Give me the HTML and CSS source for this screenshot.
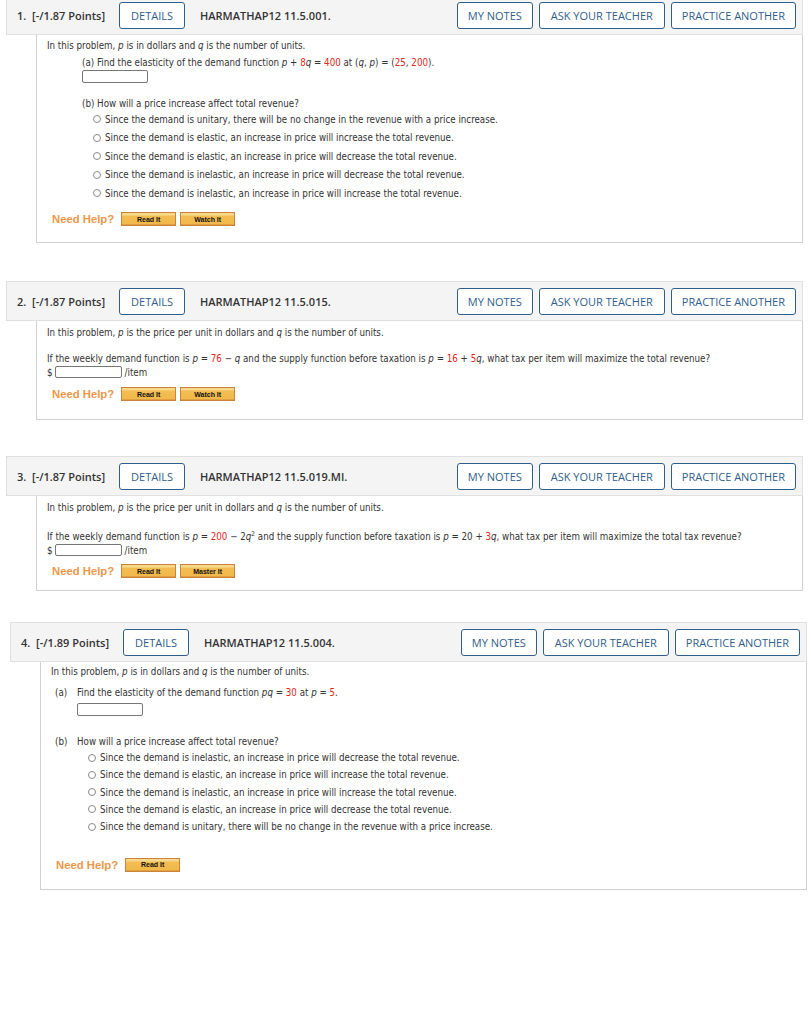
FILE: index.html
```html
<!DOCTYPE html>
<html>
<head>
<meta charset="utf-8">
<link rel="stylesheet" href="styles.css">
</head>
<body>
<div class="q q1">
  <div class="qhead">
    <span class="qnum">1.&nbsp; [-/1.87 Points]</span>
    <span class="btn details">DETAILS</span>
    <span class="code">HARMATHAP12 11.5.001.</span>
    <span class="spacer"></span>
    <span class="btn">MY NOTES</span>
    <span class="btn ask">ASK YOUR TEACHER</span>
    <span class="btn">PRACTICE ANOTHER</span>
  </div>
  <div class="qbody">
    <div class="line l-first">In this problem, <i>p</i> is in dollars and <i>q</i> is the number of units.</div>
    <div class="line a1">(a) Find the elasticity of the demand function <i>p</i> + <span class="r">8</span><i>q</i> = <span class="r">400</span> at (<i>q</i>, <i>p</i>) = (<span class="r">25</span>, <span class="r">200</span>).</div>
    <div class="ans a1in"><span class="inp w66"></span></div>
    <div class="line b1">(b) How will a price increase affect total revenue?</div>
    <div class="opts o1">
      <div class="opt"><span class="radio"></span>Since the demand is unitary, there will be no change in the revenue with a price increase.</div>
      <div class="opt"><span class="radio"></span>Since the demand is elastic, an increase in price will increase the total revenue.</div>
      <div class="opt"><span class="radio"></span>Since the demand is elastic, an increase in price will decrease the total revenue.</div>
      <div class="opt"><span class="radio"></span>Since the demand is inelastic, an increase in price will decrease the total revenue.</div>
      <div class="opt"><span class="radio"></span>Since the demand is inelastic, an increase in price will increase the total revenue.</div>
    </div>
    <div class="help h1"><span class="need">Need Help?</span><span class="hbtn">Read It</span><span class="hbtn">Watch It</span></div>
  </div>
</div>

<div class="q q2">
  <div class="qhead">
    <span class="qnum">2.&nbsp; [-/1.87 Points]</span>
    <span class="btn details">DETAILS</span>
    <span class="code">HARMATHAP12 11.5.015.</span>
    <span class="spacer"></span>
    <span class="btn">MY NOTES</span>
    <span class="btn ask">ASK YOUR TEACHER</span>
    <span class="btn">PRACTICE ANOTHER</span>
  </div>
  <div class="qbody">
    <div class="line l-first">In this problem, <i>p</i> is the price per unit in dollars and <i>q</i> is the number of units.</div>
    <div class="line if2">If the weekly demand function is <i>p</i> = <span class="r">76</span> − <i>q</i> and the supply function before taxation is <i>p</i> = <span class="r">16</span> + <span class="r">5</span><i>q</i>, what tax per item will maximize the total revenue?</div>
    <div class="dollar"><span>$</span><span class="inp w67"></span><span>/item</span></div>
    <div class="help h2"><span class="need">Need Help?</span><span class="hbtn">Read It</span><span class="hbtn">Watch It</span></div>
  </div>
</div>

<div class="q q3">
  <div class="qhead">
    <span class="qnum">3.&nbsp; [-/1.87 Points]</span>
    <span class="btn details">DETAILS</span>
    <span class="code">HARMATHAP12 11.5.019.MI.</span>
    <span class="spacer"></span>
    <span class="btn">MY NOTES</span>
    <span class="btn ask">ASK YOUR TEACHER</span>
    <span class="btn">PRACTICE ANOTHER</span>
  </div>
  <div class="qbody">
    <div class="line l-first">In this problem, <i>p</i> is the price per unit in dollars and <i>q</i> is the number of units.</div>
    <div class="line if3">If the weekly demand function is <i>p</i> = <span class="r">200</span> − 2<i>q</i><sup>2</sup> and the supply function before taxation is <i>p</i> = 20 + <span class="r">3</span><i>q</i>, what tax per item will maximize the total tax revenue?</div>
    <div class="dollar"><span>$</span><span class="inp w67"></span><span>/item</span></div>
    <div class="help h3"><span class="need">Need Help?</span><span class="hbtn">Read It</span><span class="hbtn">Master It</span></div>
  </div>
</div>

<div class="q q4">
  <div class="qhead">
    <span class="qnum">4.&nbsp; [-/1.89 Points]</span>
    <span class="btn details">DETAILS</span>
    <span class="code">HARMATHAP12 11.5.004.</span>
    <span class="spacer"></span>
    <span class="btn">MY NOTES</span>
    <span class="btn ask">ASK YOUR TEACHER</span>
    <span class="btn">PRACTICE ANOTHER</span>
  </div>
  <div class="qbody">
    <div class="line l-first4">In this problem, <i>p</i> is in dollars and <i>q</i> is the number of units.</div>
    <div class="part a4">
      <span class="plabel">(a)</span>
      <div class="pcontent">
        <div class="line">Find the elasticity of the demand function <i>pq</i> = <span class="r">30</span> at <i>p</i> = <span class="r">5</span>.</div>
        <div class="ans a4in"><span class="inp w66"></span></div>
      </div>
    </div>
    <div class="part b4">
      <span class="plabel">(b)</span>
      <div class="pcontent">
        <div class="line">How will a price increase affect total revenue?</div>
      </div>
    </div>
    <div class="opts o4">
      <div class="opt"><span class="radio"></span>Since the demand is inelastic, an increase in price will decrease the total revenue.</div>
      <div class="opt"><span class="radio"></span>Since the demand is elastic, an increase in price will increase the total revenue.</div>
      <div class="opt"><span class="radio"></span>Since the demand is inelastic, an increase in price will increase the total revenue.</div>
      <div class="opt"><span class="radio"></span>Since the demand is elastic, an increase in price will decrease the total revenue.</div>
      <div class="opt"><span class="radio"></span>Since the demand is unitary, there will be no change in the revenue with a price increase.</div>
    </div>
    <div class="help h4"><span class="need">Need Help?</span><span class="hbtn">Read It</span></div>
  </div>
</div>
</body>
</html>
```

FILE: styles.css
```css
html, body {
  margin: 0;
  padding: 0;
  background: #fff;
}
body {
  font-family: "DejaVu Sans Condensed", "DejaVu Sans", sans-serif;
  color: #333;
}
.q {
  width: 797px;
  margin-left: 6px;
}
.q1 { margin-top: -5px; }
.q2 { margin-top: 38px; }
.q3 { margin-top: 36px; }
.q4 { margin-top: 31px; margin-left: 10px; }

.qhead {
  box-sizing: border-box;
  height: 40px;
  background: #f4f4f4;
  border: 1px solid #e0e0e0;
  display: flex;
  align-items: center;
  padding: 0 6px 0 10px;
  font-family: "Open Sans", sans-serif;
  font-size: 11px;
  color: #333;
}
.qnum { font-weight: 600; margin-right: 14px; }
.code { font-weight: 600; margin-left: 15px; }
.spacer { flex: 1; }
.btn {
  box-sizing: border-box;
  height: 27px;
  display: inline-flex;
  align-items: center;
  padding: 0 10px;
  border: 1px solid #2f5e8c;
  border-radius: 3px;
  color: #2f5e8c;
  background: #fff;
  margin-left: 6px;
  font-size: 11px;
}
.details { margin-left: 0; padding: 0 11px; }
.ask { padding: 0 11px; }

.qbody {
  margin-left: 30px;
  border-left: 1px solid #d0d0d0;
  border-right: 1px solid #d0d0d0;
  border-bottom: 1px solid #d0d0d0;
  padding-left: 10px;
  font-size: 9.7px;
}
.line { line-height: 14px; white-space: nowrap; }
.r { color: #e52420; }
i { font-style: italic; }
sup { font-size: 6.5px; line-height: 0; vertical-align: 4px; }

.l-first { padding-top: 5px; }
.q1 .l-first { padding-top: 4px; }
.a1 { margin-left: 35px; margin-top: 3px; }
.ans { height: 13px; display: flex; }
.a1in { margin-left: 35px; }
.inp {
  box-sizing: border-box;
  display: inline-block;
  height: 13px;
  border: 1px solid #777;
  border-radius: 2px;
  background: #fff;
}
.w66 { width: 66px; }
.w67 { width: 67px; height: 12px; }
.b1 { margin-left: 35px; margin-top: 15px; line-height: 12px; }

.opts { display: flex; flex-direction: column; }
.opt { display: flex; align-items: center; white-space: nowrap; }
.radio {
  box-sizing: border-box;
  width: 8px;
  height: 8px;
  border: 1px solid #8a8a8a;
  border-radius: 50%;
  background: #fff;
  flex: none;
}
.o1 { margin-left: 46px; }
.o1 .opt { height: 18.5px; }
.o1 .radio { margin-right: 4px; }

.help { display: flex; align-items: center; height: 14px; }
.need {
  font-family: "Liberation Sans", Arial, sans-serif;
  font-weight: bold;
  font-size: 11.3px;
  color: #ec9748;
  margin-left: 5px;
  margin-right: 7px;
}
.hbtn {
  box-sizing: border-box;
  width: 55px;
  height: 14px;
  border: 1px solid #c9843a;
  background: linear-gradient(#f7d88c 0, #f7d88c 2px, #f3bd52 3px, #f1b84a 100%);
  box-shadow: inset 0 -1px 0 #e0a040;
  font-family: "Liberation Sans", Arial, sans-serif;
  font-weight: bold;
  font-size: 7px;
  color: #111;
  display: flex;
  align-items: center;
  justify-content: center;
  margin-right: 4px;
}
.h1 { margin-top: 9.5px; padding-bottom: 16px; }

.if2 { margin-top: 12px; }
.dollar { display: flex; align-items: center; height: 12px; }
.dollar .inp { margin-left: 2px; margin-right: 3px; }
.h2 { margin-top: 9px; padding-bottom: 18px; }

.if3 { margin-top: 15px; }
.h3 { margin-top: 8px; padding-bottom: 12px; }

.l-first4 { padding-top: 3px; }
.part { display: flex; margin-left: 4px; }
.plabel { width: 22px; line-height: 14px; flex: none; }
.a4 { margin-top: 7px; }
.a4in { margin-top: 3px; }
.b4 { margin-top: 19px; }
.o4 { margin-left: 37px; margin-top: 0; }
.o4 .opt { height: 17.25px; }
.o4 .radio { margin-right: 4px; }
.h4 { margin-top: 22.5px; padding-bottom: 17px; }
```
